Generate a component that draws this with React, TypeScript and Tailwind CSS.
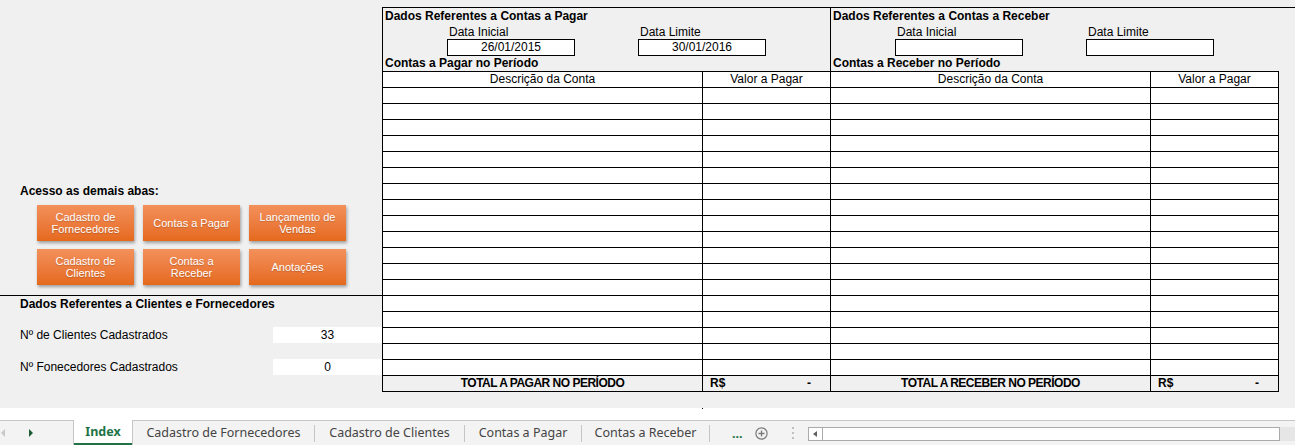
import React from 'react'

const rows = Array.from({ length: 18 }, (_, i) => i)

const buttons = [
  ['Cadastro de', 'Fornecedores'],
  ['Contas a Pagar'],
  ['Lançamento de', 'Vendas'],
  ['Cadastro de', 'Clientes'],
  ['Contas a', 'Receber'],
  ['Anotações'],
]

interface SectionProps {
  title: string
  period: string
  start: string
  end: string
  total: string
  last?: boolean
}

function Section({ title, period, start, end, total, last }: SectionProps) {
  return (
    <div className={last ? 'flex w-[449px] flex-col border-l border-black' : 'flex w-[448px] flex-col border-l border-black'}>
      <div className="h-[63px]">
        <div className="h-[16px] pl-[2px] font-bold leading-[17px]">{title}</div>
        <div className="flex h-[15px] leading-[16px]">
          <div className="ml-[64px] w-[128px] pl-[2px]">Data Inicial</div>
          <div className="ml-[63px] w-[128px] pl-[2px]">Data Limite</div>
        </div>
        <div className="flex h-[17px]">
          <div className="ml-[64px] h-[17px] w-[128px] border border-black bg-white text-center leading-[15px]">{start}</div>
          <div className="ml-[63px] h-[17px] w-[128px] border border-black bg-white text-center leading-[15px]">{end}</div>
        </div>
        <div className="h-[15px] pl-[2px] font-bold leading-[15px]">{period}</div>
      </div>

      <div className={last ? 'border-y border-r border-black' : 'border-y border-black'}>
        <div className="flex h-[16px] border-b border-black bg-white leading-[15px]">
          <div className="w-[320px] border-r border-black text-center">Descrição da Conta</div>
          <div className="flex-1 text-center">Valor a Pagar</div>
        </div>
        {rows.map((r) => (
          <div key={r} className="flex h-[16px] border-b border-black bg-white">
            <div className="w-[320px] border-r border-black" />
            <div className="flex-1" />
          </div>
        ))}
        <div className="flex h-[15px] font-bold leading-[15px]">
          <div className="w-[320px] border-r border-black text-center tracking-[-0.5px]">{total}</div>
          <div className="flex flex-1 justify-between pl-[7px] pr-[19px]">
            <span>R$</span>
            <span>-</span>
          </div>
        </div>
      </div>
    </div>
  )
}

function Tab({ label, width }: { label: string; width: string }) {
  return (
    <div className={`${width} flex items-center justify-center text-[#444444]`}>{label}</div>
  )
}

function Sep() {
  return <div className="h-[17px] w-px self-center bg-[#c6c6c6]" />
}

export default function App() {
  return (
    <div className="flex h-[445px] w-[1295px] flex-col overflow-hidden bg-[#f0f0f0] font-['Liberation_Sans',Arial,sans-serif] text-[12px] text-black">
      <div className="flex h-[408px]">
        {/* left panel */}
        <div className="flex w-[382px] flex-col pt-[184px]">
          <div className="h-[14px] pl-[20px] font-bold leading-[15px]">Acesso as demais abas:</div>
          <div className="ml-[37px] mt-[7px] grid grid-cols-[97px_97px_97px] gap-x-[9px] gap-y-[8px]">
            {buttons.map((b, i) => (
              <div
                key={i}
                className="flex h-[36px] flex-col items-center justify-center bg-gradient-to-b from-[#f3905a] to-[#e5691b] text-center text-[11px] leading-[12px] text-white shadow-[1px_2px_3px_rgba(0,0,0,0.35)] [text-shadow:0_1px_1px_rgba(0,0,0,0.2)]"
              >
                {b.map((line) => (
                  <span key={line}>{line}</span>
                ))}
              </div>
            ))}
          </div>
          <div className="mt-[10px] h-px bg-black" />
          <div className="h-[16px] pl-[20px] font-bold leading-[17px]">Dados Referentes a Clientes e Fornecedores</div>
          <div className="mt-[15px] flex h-[16px] items-center">
            <div className="w-[273px] pl-[20px] leading-[17px]">Nº de Clientes Cadastrados</div>
            <div className="h-[16px] w-[109px] bg-white text-center leading-[17px]">33</div>
          </div>
          <div className="mt-[16px] flex h-[16px] items-center">
            <div className="w-[273px] pl-[20px] leading-[17px]">Nº Fonecedores Cadastrados</div>
            <div className="h-[16px] w-[109px] bg-white text-center leading-[17px]">0</div>
          </div>
        </div>

        {/* right panel */}
        <div className="flex flex-1 flex-col pt-[7px]">
          <div className="flex border-t border-black">
            <Section
              title="Dados Referentes a Contas a Pagar"
              period="Contas a Pagar no Período"
              start="26/01/2015"
              end="30/01/2016"
              total="TOTAL A PAGAR NO PERÍODO"
            />
            <Section
              title="Dados Referentes a Contas a Receber"
              period="Contas a Receber no Período"
              start=""
              end=""
              total="TOTAL A RECEBER NO PERÍODO"
              last
            />
          </div>
        </div>
      </div>

      {/* white strip */}
      <div className="h-[12px] bg-white">
        <div className="ml-[702px] h-px w-px bg-black" />
      </div>

      {/* sheet tabs */}
      <div className="flex h-[25px] bg-[#f3f3f3] font-['Noto_Sans',sans-serif] text-[12.5px]">
        <div className="flex w-[73px] items-center border-t border-[#c6c6c6]">
          <svg width="5" height="8" viewBox="0 0 5 8" className="ml-[1px]">
            <path d="M4 0 L0 4 L4 8 Z" fill="#c8c8c8" />
          </svg>
          <svg width="5" height="8" viewBox="0 0 5 8" className="ml-[23px]">
            <path d="M0 0 L4 4 L0 8 Z" fill="#1e5c36" />
          </svg>
        </div>
        <div className="relative flex w-[60px] items-center justify-center border-x border-[#c6c6c6] bg-white font-bold text-[#217346]">
          Index
          <div className="absolute bottom-0 left-0 right-0 h-[2px] bg-[#217346]" />
        </div>
        <div className="flex flex-1 border-t border-[#c6c6c6]">
          <Tab label="Cadastro de Fornecedores" width="w-[181px]" />
          <Sep />
          <Tab label="Cadastro de Clientes" width="w-[149px]" />
          <Sep />
          <Tab label="Contas a Pagar" width="w-[116px]" />
          <Sep />
          <Tab label="Contas a Receber" width="w-[127px]" />
          <Sep />
          <div className="ml-[22px] flex items-center pt-[2px] font-bold text-[#217346]">...</div>
          <svg width="13" height="13" viewBox="0 0 13 13" className="ml-[12px] self-center">
            <circle cx="6.5" cy="6.5" r="5.6" fill="none" stroke="#7a7a7a" strokeWidth="1.2" />
            <path d="M6.5 3.5 V9.5 M3.5 6.5 H9.5" stroke="#7a7a7a" strokeWidth="1.3" />
          </svg>
          <div className="ml-[24px] flex flex-col justify-center gap-[3px]">
            <div className="h-[2px] w-[2px] bg-[#c0c0c0]" />
            <div className="h-[2px] w-[2px] bg-[#c0c0c0]" />
            <div className="h-[2px] w-[2px] bg-[#c0c0c0]" />
          </div>
          <div className="ml-[14px] mt-[6px] flex h-[14px] w-[472px] border border-[#ababab] bg-white">
            <div className="flex w-[14px] items-center justify-center border-r border-[#ababab]">
              <svg width="4" height="6" viewBox="0 0 4 6">
                <path d="M4 0 L0 3 L4 6 Z" fill="#606060" />
              </svg>
            </div>
          </div>
          <div className="mt-[6px] h-[14px] flex-1 bg-[#e6e6e6]" />
        </div>
      </div>
    </div>
  )
}
